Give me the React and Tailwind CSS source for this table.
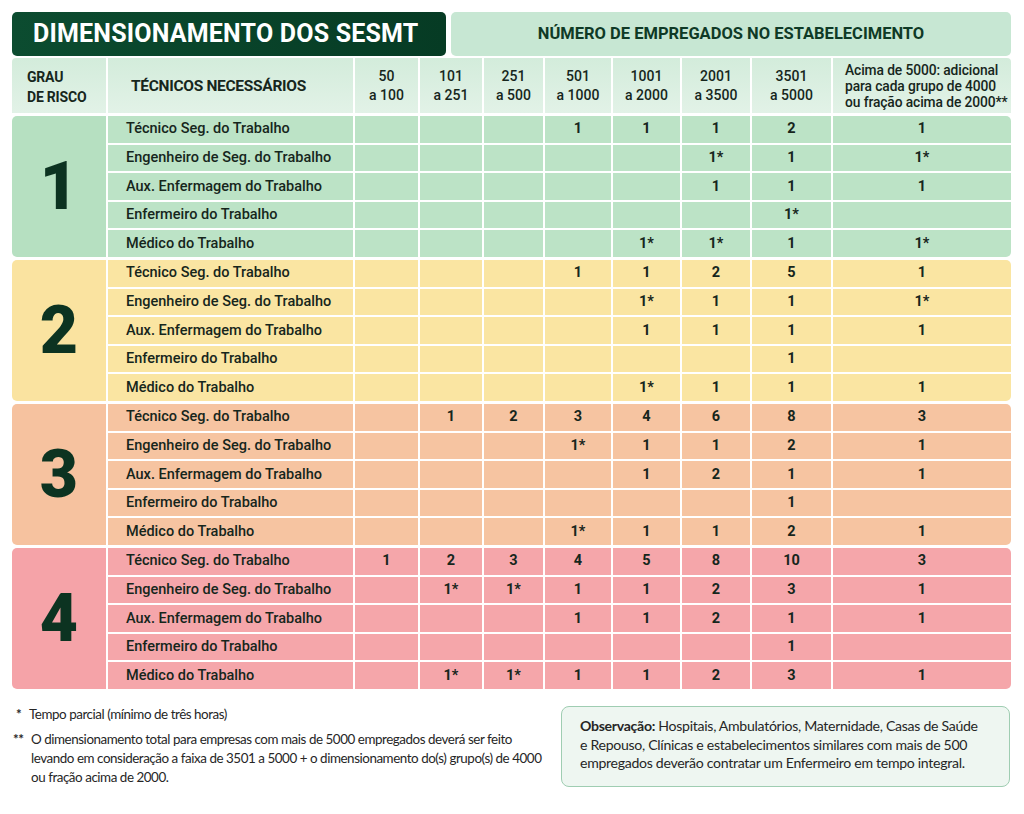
import React from "react";

const groups = [
  {
    n: "1",
    cell: "bg-[#bce3c6]",
    grau: "bg-[#b6e0c1]",
    rows: [
      ["", "", "", "1", "1", "1", "2", "1"],
      ["", "", "", "", "", "1*", "1", "1*"],
      ["", "", "", "", "", "1", "1", "1"],
      ["", "", "", "", "", "", "1*", ""],
      ["", "", "", "", "1*", "1*", "1", "1*"],
    ],
  },
  {
    n: "2",
    cell: "bg-[#fae5a2]",
    grau: "bg-[#fae3a0]",
    rows: [
      ["", "", "", "1", "1", "2", "5", "1"],
      ["", "", "", "", "1*", "1", "1", "1*"],
      ["", "", "", "", "1", "1", "1", "1"],
      ["", "", "", "", "", "", "1", ""],
      ["", "", "", "", "1*", "1", "1", "1"],
    ],
  },
  {
    n: "3",
    cell: "bg-[#f6c4a1]",
    grau: "bg-[#f6c29f]",
    rows: [
      ["", "1", "2", "3", "4", "6", "8", "3"],
      ["", "", "", "1*", "1", "1", "2", "1"],
      ["", "", "", "", "1", "2", "1", "1"],
      ["", "", "", "", "", "", "1", ""],
      ["", "", "", "1*", "1", "1", "2", "1"],
    ],
  },
  {
    n: "4",
    cell: "bg-[#f5a6aa]",
    grau: "bg-[#f5a3a8]",
    rows: [
      ["1", "2", "3", "4", "5", "8", "10", "3"],
      ["", "1*", "1*", "1", "1", "2", "3", "1"],
      ["", "", "", "1", "1", "2", "1", "1"],
      ["", "", "", "", "", "", "1", ""],
      ["", "1*", "1*", "1", "1", "2", "3", "1"],
    ],
  },
];

const roles = [
  "Técnico Seg. do Trabalho",
  "Engenheiro de Seg. do Trabalho",
  "Aux. Enfermagem do Trabalho",
  "Enfermeiro do Trabalho",
  "Médico do Trabalho",
];

const ranges = [
  ["50", "a 100"],
  ["101", "a 251"],
  ["251", "a 500"],
  ["501", "a 1000"],
  ["1001", "a 2000"],
  ["2001", "a 3500"],
  ["3501", "a 5000"],
];

const cols =
  "grid grid-cols-[94px_245px_63px_62px_59px_66px_67px_68px_79px_178px] gap-[2px]";

export default function App() {
  return (
    <div className="w-[1024px] h-[814px] bg-white font-['Roboto',sans-serif] text-[#16261c] overflow-hidden">
      <div className="pl-[12px] pt-[12px] w-[1011px]">
        {/* Title row */}
        <div className="flex gap-[5px] h-[44px]">
          <div className="w-[434px] rounded-[5px] bg-gradient-to-r from-[#0c4c30] to-[#063b24] flex items-center pl-[21px]">
            <span className="text-white font-bold text-[25px] tracking-[0.2px]">
              DIMENSIONAMENTO DOS SESMT
            </span>
          </div>
          <div className="flex-1 rounded-[5px] bg-[#c7e7d3] flex items-center justify-center">
            <span className="text-[#0f3a26] font-bold text-[16.5px]">
              NÚMERO DE EMPREGADOS NO ESTABELECIMENTO
            </span>
          </div>
        </div>

        {/* Header row */}
        <div className={`${cols} mt-[2px] h-[55px]`}>
          <div className="bg-gradient-to-b from-[#d3ecdb] to-[#e2f2e7] rounded-tl-[4px] flex flex-col justify-center pl-[15px] pt-[2px] text-[14px] font-bold leading-[20px] tracking-[-0.2px]">
            <span>GRAU</span>
            <span>DE RISCO</span>
          </div>
          <div className="bg-gradient-to-b from-[#d3ecdb] to-[#e2f2e7] flex items-center pl-[23px] pt-[3px] text-[15.5px] font-bold tracking-[-0.3px]">
            TÉCNICOS NECESSÁRIOS
          </div>
          {ranges.map(([a, b]) => (
            <div
              key={a}
              className="bg-gradient-to-b from-[#d3ecdb] to-[#e2f2e7] flex flex-col items-center justify-center pt-[1px] text-[14px] font-medium leading-[19px]"
            >
              <span>{a}</span>
              <span>{b}</span>
            </div>
          ))}
          <div className="bg-gradient-to-b from-[#d3ecdb] to-[#e2f2e7] rounded-tr-[4px] flex flex-col justify-center pl-[12px] text-[13.8px] font-medium leading-[16px] tracking-[-0.1px]">
            <span>Acima de 5000: adicional</span>
            <span>para cada grupo de 4000</span>
            <span>ou fração acima de 2000**</span>
          </div>
        </div>

        {/* Groups */}
        <div className="mt-[3px] flex flex-col gap-[3px]">
          {groups.map((g) => (
            <div key={g.n} className={`${cols} grid-rows-5 h-[141px]`}>
              <div
                className={`${g.grau} row-span-5 rounded-l-[5px] flex items-center justify-center text-[66px] font-black text-[#0c3321] leading-none`}
              >
                {g.n}
              </div>
              {g.rows.map((r, ri) => (
                <React.Fragment key={ri}>
                  <div
                    className={`${g.cell} flex items-center pl-[18px] text-[14.5px] font-medium`}
                  >
                    {roles[ri]}
                  </div>
                  {r.map((v, ci) => (
                    <div
                      key={ci}
                      className={`${g.cell} flex items-center justify-center text-[14.5px] font-bold ${
                        ci === 7 && ri === 0 ? "rounded-tr-[5px]" : ""
                      } ${ci === 7 && ri === 4 ? "rounded-br-[5px]" : ""}`}
                    >
                      {v}
                    </div>
                  ))}
                </React.Fragment>
              ))}
            </div>
          ))}
        </div>
      </div>

      {/* Footer */}
      <div className="flex mt-[16px] pl-[13px] pr-[14px] font-['Lato',sans-serif] text-[#262626]">
        <div className="w-[541px] text-[13.4px] leading-[19px] tracking-[-0.45px]">
          <div className="flex">
            <span className="w-[16px] pl-[3px] font-bold">*</span>
            <span>Tempo parcial (mínimo de três horas)</span>
          </div>
          <div className="flex mt-[6px]">
            <span className="w-[18px] shrink-0 font-bold">**</span>
            <p className="whitespace-nowrap">
              O dimensionamento total para empresas com mais de 5000 empregados deverá ser feito
              <br />
              levando em consideração a faixa de 3501 a 5000 + o dimensionamento do(s) grupo(s) de 4000
              <br />
              ou fração acima de 2000.
            </p>
          </div>
        </div>
        <div className="ml-auto w-[449px] h-[81px] mt-[1px] rounded-[8px] border border-[#9fcdb2] bg-[#eef6f1] pl-[18px] pr-[8px] pt-[10px] text-[14.1px] leading-[18.5px] tracking-[-0.3px]">
          <p className="whitespace-nowrap">
            <b className="font-bold">Observação:</b> Hospitais, Ambulatórios, Maternidade, Casas de Saúde
            <br />
            e Repouso, Clínicas e estabelecimentos similares com mais de 500
            <br />
            empregados deverão contratar um Enfermeiro em tempo integral.
          </p>
        </div>
      </div>
    </div>
  );
}
